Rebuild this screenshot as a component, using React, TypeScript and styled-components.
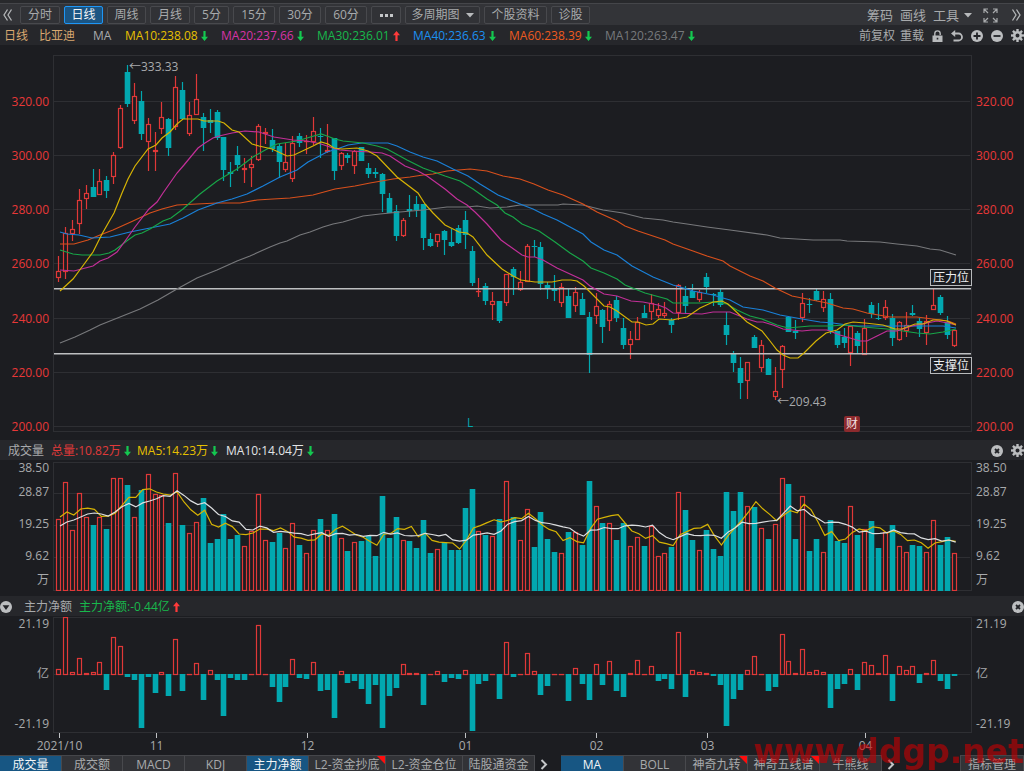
import React from 'react';
import styled, { createGlobalStyle, css } from 'styled-components';

const Global = createGlobalStyle`
  *, *::before, *::after { box-sizing: border-box; }
  body {
    margin: 0;
    background: #1c1d21;
    color: #a8aaac;
    font-family: "Open Sans", "Noto Sans", "Noto Sans CJK SC", sans-serif;
    font-size: 12px;
    line-height: 16px;
    overflow: hidden;
  }
  button {
    margin: 0;
    padding: 0;
    border: 0;
    background: none;
    color: inherit;
    font: inherit;
    white-space: nowrap;
    cursor: pointer;
  }
`;

const UP = '#e03838';
const DOWN = '#02a8b0';
const GREEN = '#14c850';
const RED = '#ff3a3a';

/* ---------- data, in chart units ---------- */

// colour, high, body top, body bottom, low
const CANDLES = `
r 256 271 278 282|r 227 233 272 279|r 220 229 234 241|r 189 200 224 234|r 185 193 199 209
g 169 187 197 197|r 169 181 195 195|g 176 180 191 198|r 152 155 177 184|r 105 108 148 149
g 65 72 104 107|r 83 96 121 124|g 91 101 134 140|r 118 124 142 171|r 132 150 152 171
r 102 117 129 134|g 118 119 148 156|r 76 87 127 130|g 82 90 119 119|r 102 115 134 136
r 74 99 115 115|g 113 117 128 151|g 109 120 123 133|g 110 112 138 140|g 137 137 170 181
g 162 172 174 187|g 146 155 165 171|r 158 168 170 183|r 156 164 168 187|r 124 126 160 161
r 128 132 134 144|g 129 140 149 152|g 144 146 162 178|r 143 162 170 172|r 136 143 179 182
g 133 136 143 147|r 135 141 142 154|r 117 131 142 145|g 128 136 137 158|r 124 150 152 153
g 138 138 171 180|r 152 153 166 170|g 153 155 158 163|r 150 151 166 174|g 147 147 161 161
g 163 168 174 178|g 168 172 174 178|g 173 174 194 212|g 193 198 213 213|g 205 211 236 241
r 218 220 236 237|g 195 209 211 217|g 196 204 210 217|g 204 204 238 250|g 233 239 246 247
r 234 234 242 247|g 230 231 240 255|g 229 242 246 247|g 225 228 243 244|g 211 220 235 249
g 246 251 283 286|r 278 291 292 297|g 283 286 301 305|r 292 301 305 320|g 301 301 321 323
r 274 274 303 306|g 267 269 277 295|r 271 282 290 291|r 244 246 282 282|g 240 246 247 257
g 242 247 284 290|g 282 285 289 299|g 275 288 291 301|r 283 287 303 307|g 288 296 318 318
r 287 292 306 312|g 293 299 315 315|g 312 317 355 373|r 293 306 316 324|g 309 310 327 343
r 301 304 321 331|g 296 300 318 322|g 318 328 345 349|r 331 339 345 359|r 317 322 340 340
g 305 313 318 318|r 294 303 312 320|r 303 309 316 318|r 302 313 316 318|g 318 320 325 333
r 284 285 313 320|g 286 296 306 314|g 284 291 298 298|r 290 292 300 302|g 273 277 287 293
g 293 294 295 306|g 288 292 305 307|g 312 325 335 345|g 351 353 363 372|g 357 368 383 399
r 362 362 381 399|g 335 337 348 348|r 340 345 368 372|g 358 359 375 375|r 367 391 397 400
r 345 346 370 388|g 316 317 332 332|g 320 331 333 339|r 293 303 318 322|g 298 304 305 313
g 288 291 300 301|r 291 299 308 312|g 293 299 331 334|g 331 331 345 348|g 328 337 343 348
r 326 326 353 366|g 331 333 346 353|r 319 328 355 355|g 302 305 314 318|g 303 318 319 320
r 300 307 318 320|g 314 318 338 346|r 321 322 340 341|r 312 325 331 337|g 305 313 315 316
g 318 321 329 337|r 315 321 333 345|r 288 305 310 310|g 295 297 313 315|g 316 322 335 339
r 330 330 346 347`
  .trim()
  .split(/[|\n]/)
  .map((row) => {
    const [c, ...v] = row.trim().split(' ');
    const [high, top, bottom, low] = v.map(Number);
    return { up: c === 'r', high, top, bottom, low };
  });

const VOLUME = [
  519, 482, 530, 493, 517, 525, 517, 529, 478, 478, 485, 517, 490, 474, 494, 495, 523, 473, 525, 533,
  522, 498, 543, 539, 514, 539, 535, 546, 531, 494, 540, 542, 533, 548, 523, 545, 553, 530, 519, 530,
  514, 538, 551, 542, 541, 536, 556, 496, 538, 517, 540, 541, 548, 520, 553, 549, 543, 550, 550, 508,
  489, 531, 535, 536, 519, 481, 517, 540, 509, 547, 512, 539, 552, 553, 532, 532, 545, 481, 506, 523,
  523, 540, 523, 546, 537, 546, 526, 556, 553, 547, 492, 510, 540, 550, 530, 549, 556, 492, 511, 492,
  506, 507, 528, 539, 524, 478, 484, 539, 496, 551, 539, 552, 520, 541, 543, 506, 535, 529, 521, 548,
  532, 525, 546, 552, 545, 546, 552, 520, 545, 537, 553,
];

const FLOW = [
  6, 58, 3, 17, 2, 3, 13, -15, 38, 29, -2, -5, -53, -2, -18, 3, -21, 36, -16, 1,
  12, -25, 5, -5, -41, -3, -5, -5, 1, 50, 1, -12, -27, -12, 16, -3, -4, 13, -16, -15,
  -43, 4, -8, -6, -14, -29, -10, -53, -21, -13, 11, 2, 2, -30, 0, 4, -7, -3, -4, 5,
  -56, -9, -6, 1, -24, 33, -2, 1, 22, 4, -20, -11, 0, 0, -26, 7, -9, -25, 11, -10,
  14, -16, -22, 2, 15, 1, 9, -6, -4, -14, 43, -22, 5, 3, 2, -1, -10, -51, -24, -15,
  5, 19, 0, -16, -12, 41, 14, 2, 26, 3, 5, 3, -33, -14, -9, 6, -15, 13, 10, 2,
  20, -26, 9, 5, 9, -8, 2, 15, -6, -14, -1,
];

const LINES = [
  { color: '#77787b', points: '60,343 75,337 90,330 100,325 125,315 140,309 158,300 177,289 197,278 217,270 237,261 250,256 270,247 280,243 287,241 300,235 310,232 323,227 333,224 343,222 363,216 380,214 400,212 423,210 447,207 467,207 477,206 490,208 507,207 520,205 527,205 558,205 563,204 583,205 603,210 623,213 643,218 663,220 673,222 687,224 707,227 730,230 767,235 780,238 813,240 840,240 847,241 880,242 897,244 917,246 930,249 940,250 956,255' },
  { color: '#d8501c', points: '60,244 74,244 88,240 100,235 113,230 133,221 150,213 162,209 177,205 197,204 217,203 240,203 257,200 273,199 290,198 313,195 335,189 355,186 370,183 393,179 410,177 423,175 433,174 447,171 470,169 487,171 503,176 520,179 534,184 548,190 563,195 583,204 597,212 617,221 625,226 638,231 665,240 673,244 693,251 707,256 723,261 730,266 750,276 763,281 775,288 792,296 807,299 827,303 843,308 853,309 867,313 890,317 917,317 940,320 948,321 956,324' },
  { color: '#1a80d8', points: '60,232 67,234 79,235 92,238 110,237 130,232 150,228 170,224 183,218 198,210 217,203 232,199 247,194 263,186 280,177 297,170 308,162 327,152 337,149 348,145 362,143 388,143 397,146 410,152 423,157 437,161 453,169 468,176 480,184 498,195 510,200 520,204 533,209 543,214 557,220 583,234 591,242 604,250 617,255 632,266 653,277 673,285 687,289 693,291 713,295 723,298 730,300 743,307 763,310 780,315 802,319 820,322 833,323 847,325 858,326 883,326 915,326 943,326 956,328' },
  { color: '#18a548', points: '60,250 73,254 82,255 100,255 109,253 115,250 128,240 135,235 142,233 150,229 163,221 171,218 183,209 200,194 217,181 237,169 253,157 267,149 277,144 297,141 307,138 321,134 327,136 335,139 343,141 363,143 377,146 387,149 407,160 423,168 445,176 460,181 473,189 487,199 497,205 505,213 513,217 522,224 539,231 555,242 570,253 583,261 591,268 604,273 617,279 625,285 645,293 667,299 673,303 700,303 713,302 727,304 737,310 750,316 762,319 777,325 788,328 810,326 830,326 845,325 863,327 887,329 903,331 917,333 930,334 943,332 956,329' },
  { color: '#c22f98', points: '60,270 74,271 93,266 100,261 108,258 117,252 128,237 135,227 149,209 157,202 163,193 177,173 184,165 198,148 205,143 213,138 219,136 232,133 245,131 259,132 274,137 293,140 307,141 321,144 330,147 340,150 352,151 370,152 382,153 390,156 405,166 418,171 427,176 445,189 457,199 467,205 475,212 487,224 501,240 522,255 528,257 535,257 543,260 557,268 583,280 590,286 604,294 617,296 631,301 643,302 658,305 666,308 673,313 702,314 713,312 730,312 747,319 757,322 763,322 773,325 783,329 802,331 812,330 827,330 840,335 860,341 867,341 877,336 887,331 897,331 912,326 927,323 937,321 948,323 956,325' },
  { color: '#d6b304', points: '60,291 73,279 82,267 93,252 102,234 114,213 122,193 128,179 135,166 148,149 156,145 162,138 170,132 177,124 183,119 198,119 204,121 218,121 224,123 232,130 239,132 252,144 259,146 272,149 287,156 294,155 313,146 321,142 328,144 334,148 342,149 357,148 368,151 377,156 397,177 418,193 425,204 433,213 445,225 459,232 467,233 473,237 487,255 502,269 513,276 521,280 535,282 552,282 562,280 571,280 577,281 584,286 590,292 604,306 610,307 617,311 632,322 638,322 646,325 653,324 659,319 672,320 687,317 700,308 713,302 722,301 728,304 747,322 762,331 770,341 777,350 783,355 790,358 798,358 804,353 816,341 826,333 837,330 845,324 853,322 865,323 883,325 895,329 902,329 915,324 923,324 933,320 940,320 947,321 956,325' },
];

const X0 = 58.6;
const STEP = 6.89;
const slot = (i: number) => Math.floor(X0 + STEP * i);

function average(values: number[], span: number, lead: number[]) {
  return values
    .map((_, i) => {
      const y =
        i < span - 1 ? lead[i] : values.slice(i - span + 1, i + 1).reduce((a, b) => a + b, 0) / span;
      return `${(X0 + 1.4 + STEP * i).toFixed(1)},${y.toFixed(1)}`;
    })
    .join(' ');
}
const VOL_MA5 = average(VOLUME, 5, [517, 512, 515, 509]);
const VOL_MA10 = average(VOLUME, 10, [526, 522, 520, 517, 514, 513, 514, 516, 512]);

/* ---------- layout ---------- */

const Page = styled.main`
  display: flex;
  flex-direction: column;
  height: 100vh;
  min-height: 600px;
  overflow: hidden;
`;

const Toolbar = styled.nav`
  display: flex;
  align-items: center;
  flex: none;
  height: 25px;
  padding: 5px 3px 0;
  background: linear-gradient(#28292c 3px, #45464a 3px, #45464a 4px, #333438 4px);
`;

const Periods = styled.div`
  display: flex;
  gap: 4px;
  margin-left: 7px;
`;

const ToolButton = styled.button<{ $w: number; $active?: boolean }>`
  display: flex;
  align-items: center;
  justify-content: center;
  gap: 6px;
  flex: none;
  width: ${(p) => p.$w}px;
  height: 18px;
  border: 1px solid #48494d;
  border-radius: 2px;
  background: #313236;
  ${(p) =>
    p.$active &&
    css`
      border-color: #1e96f5;
      background: #1b5583;
      color: #f2f4f6;
    `}
`;

const PlainButton = styled.button`
  display: flex;
  align-items: center;
  gap: 5px;
  flex: none;
`;

const LargeButton = styled(PlainButton)`
  font-size: 13px;
`;

const ExpandButton = styled(PlainButton)`
  margin: 0 6px 0 4px;
`;

const Cluster = styled.div<{ $gap: number; $end?: boolean }>`
  display: flex;
  align-items: center;
  gap: ${(p) => p.$gap}px;
  margin-left: ${(p) => (p.$end ? 'auto' : '0')};
`;

const PanelHeader = styled.header<{ $indent?: number }>`
  display: flex;
  align-items: center;
  flex: none;
  height: 20px;
  padding-top: 1px;
  padding-left: ${(p) => p.$indent ?? 0}px;
  overflow: hidden;
  background: #26272b;
  white-space: nowrap;
`;

const FoldButton = styled(PlainButton)`
  width: 24px;
`;

const Title = styled.span<{ $w: number; $color?: string }>`
  flex: none;
  width: ${(p) => p.$w}px;
  color: ${(p) => p.$color ?? 'inherit'};
`;

const Reading = styled.span<{ $w: number; $color: string }>`
  display: flex;
  align-items: center;
  gap: 3px;
  flex: none;
  width: ${(p) => p.$w}px;
  color: ${(p) => p.$color};
`;

const Panel = styled.section<{ $h?: number }>`
  display: grid;
  grid-template-columns: 53px minmax(0, 1fr) 52px;
  grid-template-rows: minmax(0, 1fr);
  flex: ${(p) => (p.$h ? `0 0 ${p.$h}px` : '1 1 0')};
  min-height: 0;
`;

const Plot = styled.div<{ $top: number; $bottom: number }>`
  position: relative;
  min-height: 0;
  margin: ${(p) => p.$top}px 0 ${(p) => p.$bottom}px;
  box-shadow: inset 0 0 0 1px #2e2f33;
`;

const Canvas = styled.svg`
  display: block;
  width: 100%;
  height: 100%;
`;

const Axis = styled.div<{ $right?: boolean }>`
  min-height: 0;
  padding-left: ${(p) => (p.$right ? 4 : 0)}px;
  padding-right: ${(p) => (p.$right ? 0 : 4)}px;
  text-align: ${(p) => (p.$right ? 'left' : 'right')};
`;

const PriceAxis = styled(Axis)`
  display: flex;
  flex-direction: column;
  justify-content: space-between;
  padding-top: 49px;
  padding-bottom: 5px;
  color: #e83838;
`;

const VolumeAxis = styled(Axis)`
  display: grid;
  grid-template-rows: 16px 32px 32px 32px 16px;
  align-items: center;
  align-content: start;
`;

const FlowAxis = styled(Axis)`
  display: flex;
  flex-direction: column;
  justify-content: space-between;
  padding-top: 1px;
  padding-bottom: 2px;
  line-height: 14px;
`;

const DateAxis = styled.div`
  display: flex;
  flex: none;
  height: 22px;
  margin: 0 52px 0 53px;
`;

const Span = styled.div<{ $grow: number }>`
  flex: ${(p) => p.$grow} 0 0;
`;

const Mark = styled.div`
  display: flex;
  flex-direction: column;
  align-items: center;
  width: 1px;
  white-space: nowrap;
  &::before {
    content: '';
    flex: none;
    width: 1px;
    height: 5px;
    background: #c0c2c4;
  }
`;

const Note = styled.span<{ $x: number; $y: number; $color?: string }>`
  position: absolute;
  left: ${(p) => (((p.$x - 53) / 919) * 100).toFixed(3)}%;
  top: ${(p) => (((p.$y - 55) / 377) * 100).toFixed(3)}%;
  color: ${(p) => p.$color ?? 'inherit'};
  white-space: nowrap;
`;

const Level = styled.span<{ $y: number }>`
  position: absolute;
  right: 0;
  top: ${(p) => (((p.$y - 55) / 377) * 100).toFixed(3)}%;
  width: 42px;
  height: 17px;
  border: 1px solid #b8babc;
  background: #1c1d21;
  color: #eceeef;
  line-height: 15px;
  text-align: center;
`;

const Badge = styled(Note)`
  width: 16px;
  height: 16px;
  border-radius: 2px;
  background: #8c2a2d;
  color: #f2dede;
  text-align: center;
`;

const Tabs = styled.footer`
  display: flex;
  flex: none;
  height: 16px;
  overflow: hidden;
`;

const Tab = styled.button<{ $w: number; $active?: boolean; $flag?: boolean }>`
  position: relative;
  flex: none;
  width: ${(p) => p.$w}px;
  height: 18px;
  border-top: 1px solid #45464a;
  border-right: 1px solid #48494d;
  background: ${(p) => (p.$active ? '#175683' : '#323337')};
  color: ${(p) => (p.$active ? '#f2f4f6' : 'inherit')};
  line-height: 17px;
  ${(p) =>
    p.$flag &&
    css`
      &::after {
        content: '';
        position: absolute;
        top: 0;
        right: 0;
        border-top: 8px solid #ff0d0d;
        border-left: 8px solid transparent;
      }
    `}
`;

const More = styled.button`
  display: flex;
  align-items: center;
  justify-content: center;
  flex: none;
  width: 18px;
  height: 18px;
`;

const TabGroup = styled.div`
  display: flex;
  flex: none;
  margin-right: 8px;
`;

const Manage = styled(Tab)`
  margin-left: auto;
  border-left: 1px solid #48494d;
`;

const Watermark = styled.div`
  position: fixed;
  right: 0;
  bottom: -1px;
  color: rgba(196, 0, 4, 0.62);
  font-family: "DejaVu Sans", sans-serif;
  font-size: 33px;
  font-weight: 700;
  line-height: 40px;
  pointer-events: none;
`;

/* ---------- icons ---------- */

const Arrow = ({ up }: { up?: boolean }) => (
  <svg width="7" height="10" viewBox="0 0 7 10" fill={up ? RED : GREEN} aria-hidden="true">
    <path d={up ? 'M3.5 0 7 4.2H4.6V10H2.4V4.2H0z' : 'M3.5 10 0 5.8h2.4V0h2.2v5.8H7z'} />
  </svg>
);

const Caret = () => (
  <svg width="8" height="5" viewBox="0 0 8 5" fill="#b8babc" aria-hidden="true">
    <path d="M0 0h8L4 4.6z" />
  </svg>
);

const Double = ({ right }: { right?: boolean }) => (
  <svg width="10" height="12" viewBox="0 0 10 12" fill="none" stroke="#b4b6b8" strokeWidth="1.3" aria-hidden="true">
    <path d={right ? 'M1.5.5 5 6 1.5 11.5M5.5.5 9 6l-3.5 5.5' : 'M4.5.5 1 6l3.5 5.5M8.5.5 5 6l3.5 5.5'} />
  </svg>
);

const Dots = () => (
  <svg width="13" height="3" viewBox="0 0 13 3" fill="#c4c6c8" aria-hidden="true">
    <path d="M0 0h3v3H0zM5 0h3v3H5zM10 0h3v3h-3z" />
  </svg>
);

const Expand = () => (
  <svg width="15" height="15" viewBox="0 0 15 15" fill="none" stroke="#a8aaac" strokeWidth="1.2" aria-hidden="true">
    <path d="M5 1H1v4M1 1l4 4M10 1h4v4M14 1l-4 4M5 14H1v-4M1 14l4-4M10 14h4v-4M14 14l-4-4" />
  </svg>
);

const Lock = () => (
  <svg width="11" height="12" viewBox="0 0 11 12" aria-hidden="true">
    <path d="M2.8 6V3.6a2.7 2.7 0 0 1 5.4 0V5" fill="none" stroke="#b8babc" strokeWidth="1.4" />
    <path fill="#b8babc" fillRule="evenodd" d="M.5 5.5h10V12H.5zM4.7 7.800v1.800h1.600V7.800z" />
  </svg>
);

const Undo = () => (
  <svg width="12" height="12" viewBox="0 0 12 12" aria-hidden="true">
    <path d="M2.5 3.5h5a3.5 3.5 0 0 1 0 7h-5" fill="none" stroke="#b8babc" strokeWidth="1.8" />
    <path d="M4.2 0v7L0 3.5z" fill="#b8babc" />
  </svg>
);

const DISC_MARK = { plus: 'M6 2.5v7M2.5 6h7', minus: 'M2.5 6h7', close: 'M4 4l4 4M8 4l-4 4' };

const Disc = ({ kind }: { kind: 'plus' | 'minus' | 'close' | 'down' }) => (
  <svg width="12" height="12" viewBox="0 0 12 12" aria-hidden="true">
    <circle cx="6" cy="6" r="6" fill="#bcbec0" />
    {kind === 'down' ? (
      <path d="M2.6 4.2h6.8L6 9z" fill="#222327" />
    ) : (
      <path d={DISC_MARK[kind]} stroke="#222327" strokeWidth="1.8" />
    )}
  </svg>
);

const Gear = () => (
  <svg width="13" height="13" viewBox="0 0 13 13" aria-hidden="true">
    <circle cx="6.5" cy="6.5" r="3.3" fill="none" stroke="#bcbec0" strokeWidth="2.6" />
    {[0, 45, 90, 135, 180, 225, 270, 315].map((a) => (
      <path key={a} d="M5.3 0h2.4v2.6H5.3z" fill="#bcbec0" transform={`rotate(${a} 6.5 6.5)`} />
    ))}
  </svg>
);

const Chevron = () => (
  <svg width="8" height="11" viewBox="0 0 8 11" fill="none" stroke="#c4c6c8" strokeWidth="2" aria-hidden="true">
    <path d="M1.5 1 6 5.5 1.5 10" />
  </svg>
);

/* ---------- charts ---------- */

const Rules = ({ at }: { at: number[] }) => (
  <g stroke="#2e2f33">
    {at.map((y) => (
      <line key={y} x1="53" x2="970" y1={y + 0.5} y2={y + 0.5} />
    ))}
  </g>
);

const Bar = ({ i, top, bottom, up }: { i: number; top: number; bottom: number; up: boolean }) => {
  const x = slot(i) - 2;
  return up ? (
    <rect
      x={x + 0.5}
      y={top + 0.5}
      width="4"
      height={Math.max(bottom - top - 1, 0.1)}
      fill="#1c1d21"
      stroke={UP}
      strokeWidth="1.2"
    />
  ) : (
    <rect x={x - 0.3} y={top} width="5.6" height={Math.max(bottom - top, 1)} fill={DOWN} />
  );
};

const PriceChart = () => (
  <Canvas viewBox="53 55 919 377" preserveAspectRatio="none" role="img" aria-label="日线">
    <Rules at={[101, 155, 209, 263, 318, 372, 426]} />
    {CANDLES.map((c, i) => (
      <g key={i}>
        <line
          x1={slot(i) + 0.5}
          x2={slot(i) + 0.5}
          y1={c.high}
          y2={c.low}
          stroke={c.up ? UP : DOWN}
          strokeWidth="1.2"
        />
        <Bar i={i} top={c.top} bottom={c.bottom} up={c.up} />
      </g>
    ))}
    <g stroke="#bdbfc1" strokeWidth="1.5">
      <line x1="54" x2="971" y1="288.8" y2="288.8" />
      <line x1="54" x2="971" y1="353.8" y2="353.8" />
    </g>
    {LINES.map((l) => (
      <polyline key={l.color} points={l.points} fill="none" stroke={l.color} strokeWidth="1.2" />
    ))}
  </Canvas>
);

const VolumeChart = () => (
  <Canvas viewBox="53 462 919 129" preserveAspectRatio="none" role="img" aria-label="成交量">
    <Rules at={[493, 525, 557]} />
    {VOLUME.map((v, i) => (
      <Bar key={i} i={i} top={v} bottom={591} up={CANDLES[i].up} />
    ))}
    <polyline points={VOL_MA5} fill="none" stroke="#d6b304" strokeWidth="1.2" />
    <polyline points={VOL_MA10} fill="none" stroke="#dcdee0" strokeWidth="1.2" />
  </Canvas>
);

const FlowChart = () => (
  <Canvas viewBox="53 617 919 116" preserveAspectRatio="none" role="img" aria-label="主力净额">
    <Rules at={[674]} />
    {FLOW.map((v, i) =>
      v < 0 ? (
        <Bar key={i} i={i} top={674} bottom={675 - v} up={false} />
      ) : (
        <Bar key={i} i={i} top={675 - Math.max(v, 1)} bottom={675} up />
      ),
    )}
  </Canvas>
);

/* ---------- page ---------- */

const PERIODS: [string, number][] = [
  ['分时', 40], ['日线', 39], ['周线', 39], ['月线', 40], ['5分', 35], ['15分', 42], ['30分', 42], ['60分', 42],
];

const AVERAGES: [string, string, boolean?][] = [
  ['MA10:238.08', '#e6c000'],
  ['MA20:237.66', '#d633a6'],
  ['MA30:236.01', '#18b84c', true],
  ['MA40:236.63', '#1c90f0'],
  ['MA60:238.39', '#ec5a20'],
  ['MA120:263.47', '#77797c'],
];

const PRICES = ['320.00', '300.00', '280.00', '260.00', '240.00', '220.00', '200.00'];
const VOLUMES = ['38.50', '28.87', '19.25', '9.62', '万'];
const FLOWS = ['21.19', '亿', '-21.19'];
const MONTHS: [string, number][] = [
  ['2021/10', 97], ['11', 151], ['12', 158], ['01', 131], ['02', 111], ['03', 158], ['04', 107],
];

type TabItem = [name: string, width: number, active?: boolean, flag?: boolean];

const LEFT_TABS: TabItem[] = [
  ['成交量', 62, true], ['成交额', 61], ['MACD', 62], ['KDJ', 62], ['主力净额', 62, true],
  ['L2-资金抄底', 77, false, true], ['L2-资金仓位', 77], ['陆股通资金', 72],
];
const RIGHT_TABS: TabItem[] = [
  ['MA', 63, true], ['BOLL', 62], ['神奇九转', 62, false, true], ['神奇五线谱', 72, false, true], ['牛熊线', 62],
];

const IndicatorTabs = ({ items }: { items: TabItem[] }) => (
  <TabGroup>
    {items.map(([name, w, active, flag]) => (
      <Tab key={name} $w={w} $active={active} $flag={flag}>
        {name}
      </Tab>
    ))}
    <More aria-label="更多指标">
      <Chevron />
    </More>
  </TabGroup>
);

const labels = (items: string[]) => items.map((t) => <span key={t}>{t}</span>);

export default function App() {
  return (
    <Page>
      <Global />
      <Toolbar>
        <PlainButton aria-label="收起">
          <Double />
        </PlainButton>
        <Periods>
          {PERIODS.map(([name, w]) => (
            <ToolButton key={name} $w={w} $active={name === '日线'}>
              {name}
            </ToolButton>
          ))}
          <ToolButton $w={30} aria-label="更多">
            <Dots />
          </ToolButton>
          <ToolButton $w={75}>
            多周期图
            <Caret />
          </ToolButton>
          <ToolButton $w={63}>个股资料</ToolButton>
          <ToolButton $w={39}>诊股</ToolButton>
        </Periods>
        <Cluster $gap={7} $end>
          <LargeButton>筹码</LargeButton>
          <LargeButton>画线</LargeButton>
          <LargeButton>
            工具
            <Caret />
          </LargeButton>
          <ExpandButton aria-label="全屏">
            <Expand />
          </ExpandButton>
          <PlainButton aria-label="展开">
            <Double right />
          </PlainButton>
        </Cluster>
      </Toolbar>

      <PanelHeader $indent={4}>
        <Title $w={35} $color="#d9a870">日线</Title>
        <Title $w={54} $color="#d9a870">比亚迪</Title>
        <Title $w={32}>MA</Title>
        {AVERAGES.map(([text, color, up]) => (
          <Reading key={text} $w={96} $color={color}>
            {text}
            <Arrow up={up} />
          </Reading>
        ))}
        <Cluster $gap={8} $end>
          <Cluster $gap={5}>
            <PlainButton>前复权</PlainButton>
            <PlainButton>重载</PlainButton>
          </Cluster>
          <PlainButton aria-label="锁定"><Lock /></PlainButton>
          <PlainButton aria-label="撤销"><Undo /></PlainButton>
          <PlainButton aria-label="放大"><Disc kind="plus" /></PlainButton>
          <PlainButton aria-label="缩小"><Disc kind="minus" /></PlainButton>
          <PlainButton aria-label="设置"><Gear /></PlainButton>
        </Cluster>
      </PanelHeader>
      <Panel>
        <PriceAxis>{labels(PRICES)}</PriceAxis>
        <Plot $top={10} $bottom={8}>
          <PriceChart />
          <Note $x={129} $y={59}>←333.33</Note>
          <Note $x={777} $y={394}>←209.43</Note>
          <Note $x={467} $y={415} $color={DOWN}>L</Note>
          <Badge $x={844} $y={416}>财</Badge>
          <Level $y={269}>压力位</Level>
          <Level $y={357}>支撑位</Level>
        </Plot>
        <PriceAxis $right>{labels(PRICES)}</PriceAxis>
      </Panel>

      <PanelHeader $indent={8}>
        <Title $w={43}>成交量</Title>
        <Reading $w={86} $color="#e03a3a">总量:10.82万<Arrow /></Reading>
        <Reading $w={89} $color="#e6c000">MA5:14.23万<Arrow /></Reading>
        <Reading $w={96} $color="#e2e4e6">MA10:14.04万<Arrow /></Reading>
        <Cluster $gap={8} $end>
          <PlainButton aria-label="关闭"><Disc kind="close" /></PlainButton>
          <PlainButton aria-label="设置"><Gear /></PlainButton>
        </Cluster>
      </PanelHeader>
      <Panel $h={136}>
        <VolumeAxis>{labels(VOLUMES)}</VolumeAxis>
        <Plot $top={2} $bottom={5}>
          <VolumeChart />
        </Plot>
        <VolumeAxis $right>{labels(VOLUMES)}</VolumeAxis>
      </Panel>

      <PanelHeader>
        <FoldButton aria-label="折叠"><Disc kind="down" /></FoldButton>
        <Title $w={55}>主力净额</Title>
        <Reading $w={110} $color="#18b84c">主力净额:-0.44亿<Arrow up /></Reading>
        <Cluster $gap={8} $end>
          <PlainButton aria-label="关闭"><Disc kind="close" /></PlainButton>
        </Cluster>
      </PanelHeader>
      <Panel $h={117}>
        <FlowAxis>{labels(FLOWS)}</FlowAxis>
        <Plot $top={1} $bottom={0}>
          <FlowChart />
        </Plot>
        <FlowAxis $right>{labels(FLOWS)}</FlowAxis>
      </Panel>

      <DateAxis>
        <Span $grow={6} />
        {MONTHS.map(([name, grow]) => (
          <Span key={name} $grow={grow}>
            <Mark>{name}</Mark>
          </Span>
        ))}
      </DateAxis>

      <Tabs>
        <IndicatorTabs items={LEFT_TABS} />
        <IndicatorTabs items={RIGHT_TABS} />
        <Manage $w={64}>指标管理</Manage>
      </Tabs>
      <Watermark>www.ddgp.net</Watermark>
    </Page>
  );
}
